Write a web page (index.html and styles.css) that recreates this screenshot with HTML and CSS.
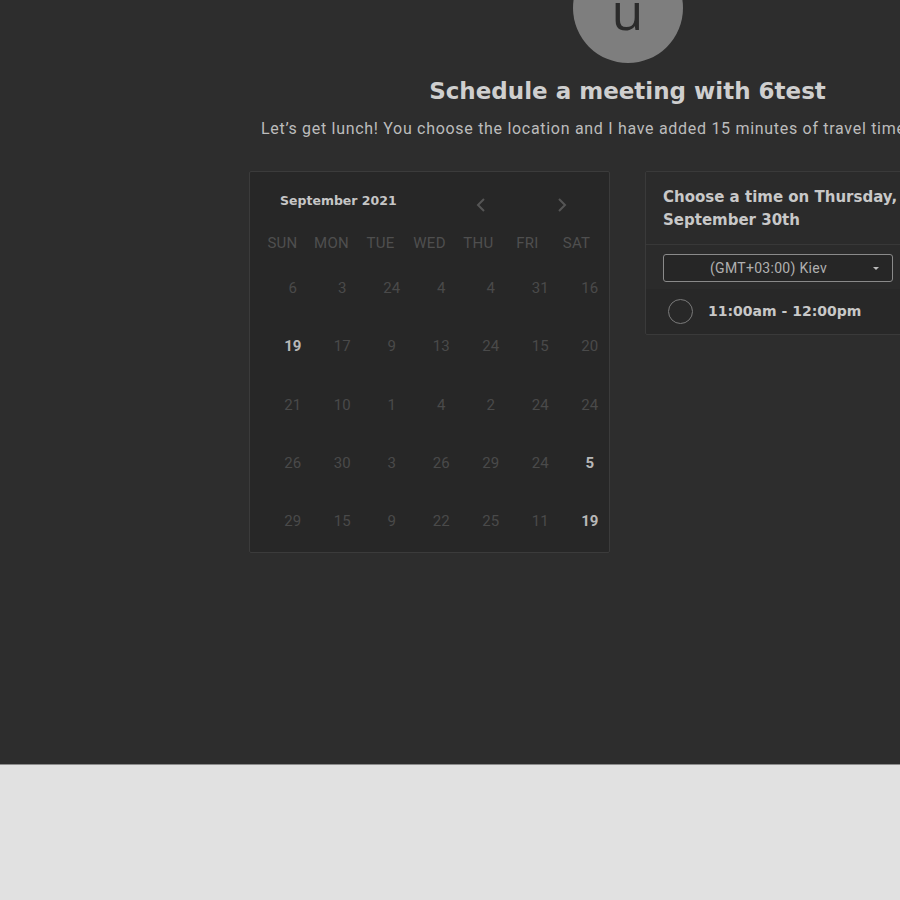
FILE: index.html
```html
<!DOCTYPE html>
<html>
<head>
<meta charset="utf-8">
<link rel="stylesheet" href="styles.css">
</head>
<body>
<div class="page">
  <div class="wrap">
    <div class="avatar"><span>u</span></div>
    <h1 class="title">Schedule a meeting with 6test</h1>
    <p class="subtitle">Let’s get lunch! You choose the location and I have added 15 minutes of travel time</p>
    <div class="panels">
      <div class="calendar">
        <div class="cal-head">
          <span class="month">September 2021</span>
          <span class="nav prev"><svg width="10" height="14" viewBox="0 0 10 14"><path d="M8 1 L2 7 L8 13" fill="none" stroke="#555" stroke-width="2"/></svg></span>
          <span class="nav next"><svg width="10" height="14" viewBox="0 0 10 14"><path d="M2 1 L8 7 L2 13" fill="none" stroke="#555" stroke-width="2"/></svg></span>
        </div>
        <div class="dow">
          <span>SUN</span><span>MON</span><span>TUE</span><span>WED</span><span>THU</span><span>FRI</span><span>SAT</span>
        </div>
        <div class="days">
          <span>6</span><span>3</span><span>24</span><span>4</span><span>4</span><span>31</span><span>16</span>
          <span class="on">19</span><span>17</span><span>9</span><span>13</span><span>24</span><span>15</span><span>20</span>
          <span>21</span><span>10</span><span>1</span><span>4</span><span>2</span><span>24</span><span>24</span>
          <span>26</span><span>30</span><span>3</span><span>26</span><span>29</span><span>24</span><span class="on">5</span>
          <span>29</span><span>15</span><span>9</span><span>22</span><span>25</span><span>11</span><span class="on">19</span>
        </div>
      </div>
      <div class="times">
        <div class="times-head">Choose a time on Thursday,<br>September 30th</div>
        <div class="tz-row">
          <div class="select"><span class="sel-text">(GMT+03:00) Kiev</span><span class="caret"></span></div>
        </div>
        <div class="slot">
          <span class="radio"></span>
          <span class="slot-text">11:00am - 12:00pm</span>
        </div>
      </div>
    </div>
  </div>
</div>
<div class="footer"></div>
</body>
</html>
```
FILE: styles.css
```css
html, body {
  margin: 0;
  padding: 0;
  overflow: hidden;
  background: #e1e1e1;
}
.page {
  height: 764px;
  background: #2d2d2d;
  overflow: hidden;
  font-family: Roboto, "Liberation Sans", sans-serif;
}
.wrap {
  margin-left: 249px;
  width: 757px;
  display: flex;
  flex-direction: column;
  align-items: center;
}
.avatar {
  margin-top: -47px;
  width: 110px;
  height: 110px;
  border-radius: 50%;
  background: #7e7e7e;
  display: flex;
  justify-content: center;
}
.avatar span {
  font-family: "Open Sans", sans-serif;
  font-size: 52px;
  line-height: 20px;
  height: 20px;
  color: #2b2b2b;
  margin-top: 47px;
}
.title {
  margin: 14px 0 0;
  font-family: "DejaVu Sans", sans-serif;
  font-weight: 700;
  font-size: 23px;
  line-height: 28px;
  color: #cfcfcf;
}
.subtitle {
  align-self: flex-start;
  margin: 14px 0 0 12px;
  font-size: 16px;
  line-height: 20px;
  color: #bcbcbc;
  white-space: nowrap;
  letter-spacing: 0.7px;
}
.panels {
  align-self: flex-start;
  display: flex;
  align-items: flex-start;
  gap: 35px;
  margin-top: 32px;
}
.calendar {
  width: 359px;
  height: 380px;
  background: #272727;
  border: 1px solid #3b3b3b;
  border-radius: 2px;
}
.cal-head {
  display: flex;
  align-items: center;
  height: 56px;
  padding-left: 30px;
}
.month {
  font-family: "DejaVu Sans", sans-serif;
  font-weight: 700;
  font-size: 12.5px;
  color: #c6c6c6;
  width: 196px;
}
.nav {
  display: flex;
  margin-top: 10px;
}
.nav.next { margin-left: 71px; }
.dow {
  display: grid;
  grid-template-columns: repeat(7, 49px);
  padding-left: 8px;
  margin-top: 4px;
  height: 22px;
  align-items: center;
}
.dow span {
  text-align: center;
  font-size: 15px;
  color: #4f4f4f;
  letter-spacing: 0.3px;
}
.days {
  display: grid;
  grid-template-columns: repeat(7, 49.5px);
  grid-auto-rows: 58.25px;
  padding-left: 18px;
  margin-top: 5px;
}
.days span {
  display: flex;
  align-items: center;
  justify-content: center;
  font-size: 15px;
  color: #4a4a4a;
}
.days span.on {
  color: #b8b8b8;
  font-weight: 700;
}
.times {
  width: 270px;
  background: #282828;
  border: 1px solid #3a3a3a;
  border-radius: 2px;
}
.times-head {
  background: #2b2b2b;
  padding: 14px 17px 12px;
  font-family: "DejaVu Sans", sans-serif;
  font-weight: 700;
  font-size: 15px;
  line-height: 23px;
  color: #c8c8c8;
  white-space: nowrap;
  border-bottom: 1px solid #383838;
}
.tz-row {
  background: #2b2b2b;
  padding: 9px 17px 7px;
}
.select {
  width: 228px;
  height: 26px;
  border: 1px solid #8a8a8a;
  border-radius: 3px;
  background: #262626;
  display: flex;
  align-items: center;
}
.sel-text {
  flex: 1;
  text-align: center;
  font-size: 14px;
  color: #b0b0b0;
  letter-spacing: 0.3px;
}
.caret {
  width: 0;
  height: 0;
  border-left: 3px solid transparent;
  border-right: 3px solid transparent;
  border-top: 3px solid #bbb;
  margin-right: 13px;
}
.slot {
  display: flex;
  align-items: center;
  height: 44px;
  padding-left: 22px;
  padding-bottom: 1px;
}
.radio {
  border: 1.5px solid #7a7a7a;
  border-radius: 50%;
  box-sizing: border-box;
  width: 25px;
  height: 25px;
}
.slot-text {
  margin-left: 15px;
  font-family: "DejaVu Sans", sans-serif;
  font-weight: 700;
  font-size: 14px;
  color: #c8c8c8;
}
.footer {
  height: 136px;
  border-top: 1px solid #8c8c8c;
  background: #e1e1e1;
  box-sizing: border-box;
}
```
